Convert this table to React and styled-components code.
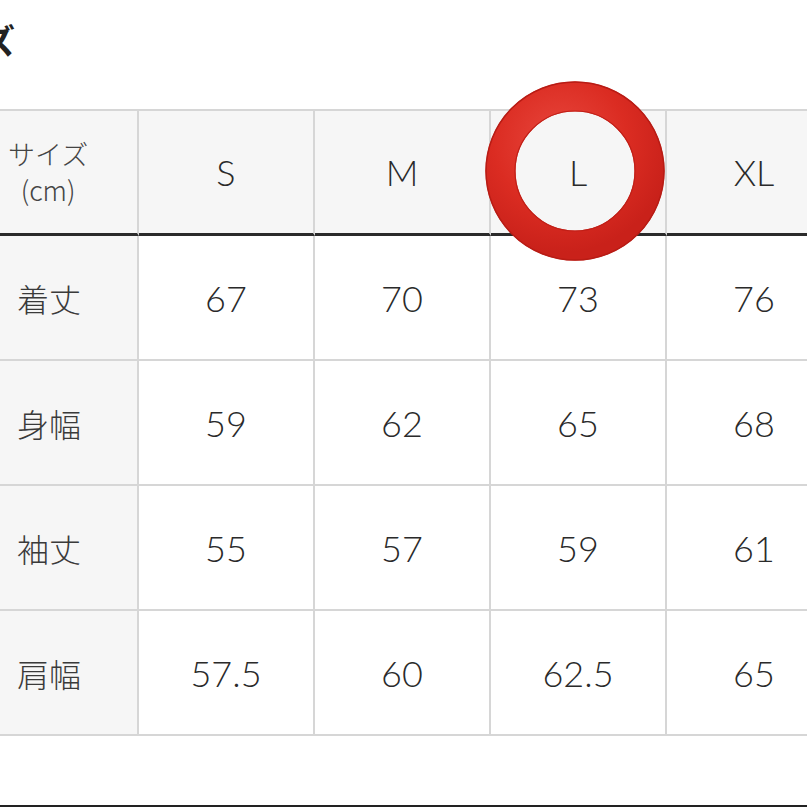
import React from "react";
import styled, { createGlobalStyle } from "styled-components";

const Global = createGlobalStyle`
  html, body { margin: 0; padding: 0; background: #ffffff; overflow: hidden; }
  body { width: 807px; height: 807px; font-family: Lato, "Noto Sans CJK JP", sans-serif; color: #333; }
`;

const Page = styled.div`
  width: 807px;
  height: 807px;
  overflow: hidden;
  position: relative;
  display: flex;
  flex-direction: column;
`;

const Heading = styled.h2`
  margin: 23px 0 0 -86px;
  font-family: "Noto Sans CJK JP", sans-serif;
  font-size: 34px;
  line-height: 34px;
  font-weight: 700;
  color: #222;
  white-space: nowrap;
`;

const Table = styled.div`
  margin-top: 52px;
  display: grid;
  grid-template-columns: 139px repeat(4, 176px);
  width: max-content;
  border-top: 2px solid #d6d6d6;
`;

const Cell = styled.div`
  position: relative;
  box-sizing: border-box;
  height: 125px;
  display: flex;
  align-items: center;
  justify-content: ${(p) => (p.$label ? "flex-start" : "center")};
  padding-left: ${(p) => (p.$label ? "17px" : "0")};
  border-right: 2px solid #d6d6d6;
  border-bottom: ${(p) => (p.$header ? "3px solid #2b2b2b" : "2px solid #d6d6d6")};
  background: ${(p) => (p.$header || p.$label ? "#f6f6f6" : "#ffffff")};
  font-family: ${(p) => (p.$jp ? '"Noto Sans CJK JP", sans-serif' : 'Lato, "Noto Sans CJK JP", sans-serif')};
  font-size: ${(p) => (p.$jp ? "32px" : "36px")};
  font-weight: 300;
  color: ${(p) => (p.$jp ? "#3a3a3a" : "#2a2a2a")};
`;

const UnitBlock = styled.div`
  margin-left: -9px;
  display: flex;
  flex-direction: column;
  align-items: center;
  gap: 2px;
  font-family: "Noto Sans CJK JP", sans-serif;
  font-size: 27px;
  line-height: 34px;
  font-weight: 300;
  color: #444;
`;

const Ring = styled.svg`
  position: absolute;
  left: calc(50% - 93px);
  top: calc(50% - 91px);
  width: 180px;
  height: 180px;
  z-index: 3;
  pointer-events: none;
`;

const Bottom = styled.div`
  position: absolute;
  left: 0;
  right: 0;
  bottom: 0;
  height: 2px;
  background: #222;
`;

const sizes = ["S", "M", "L", "XL"];
const rows = [
  ["着丈", ["67", "70", "73", "76"]],
  ["身幅", ["59", "62", "65", "68"]],
  ["袖丈", ["55", "57", "59", "61"]],
  ["肩幅", ["57.5", "60", "62.5", "65"]],
];

function RedCircle() {
  return (
    <Ring viewBox="0 0 180 180">
      <defs>
        <radialGradient id="rg" cx="40%" cy="30%" r="75%">
          <stop offset="0%" stopColor="#e8473d" />
          <stop offset="60%" stopColor="#db2c22" />
          <stop offset="100%" stopColor="#c9211a" />
        </radialGradient>
      </defs>
      <circle cx="90" cy="90" r="74.5" fill="none" stroke="url(#rg)" strokeWidth="30" />
      <circle cx="90" cy="90" r="89" fill="none" stroke="#b81c15" strokeWidth="1.5" />
      <circle cx="90" cy="90" r="60" fill="none" stroke="#c01f17" strokeWidth="1.2" />
    </Ring>
  );
}

export default function App() {
  return (
    <Page>
      <Global />
      <Heading>サイズ</Heading>
      <Table>
        <Cell $header $label>
          <UnitBlock>
            <span>サイズ</span>
            <span>(cm)</span>
          </UnitBlock>
        </Cell>
        {sizes.map((s) => (
          <Cell key={s} $header>
            {s}
            {s === "L" && <RedCircle />}
          </Cell>
        ))}
        {rows.map(([label, vals]) => (
          <React.Fragment key={label}>
            <Cell $label $jp>
              {label}
            </Cell>
            {vals.map((v, i) => (
              <Cell key={i}>{v}</Cell>
            ))}
          </React.Fragment>
        ))}
      </Table>
      <Bottom />
    </Page>
  );
}
